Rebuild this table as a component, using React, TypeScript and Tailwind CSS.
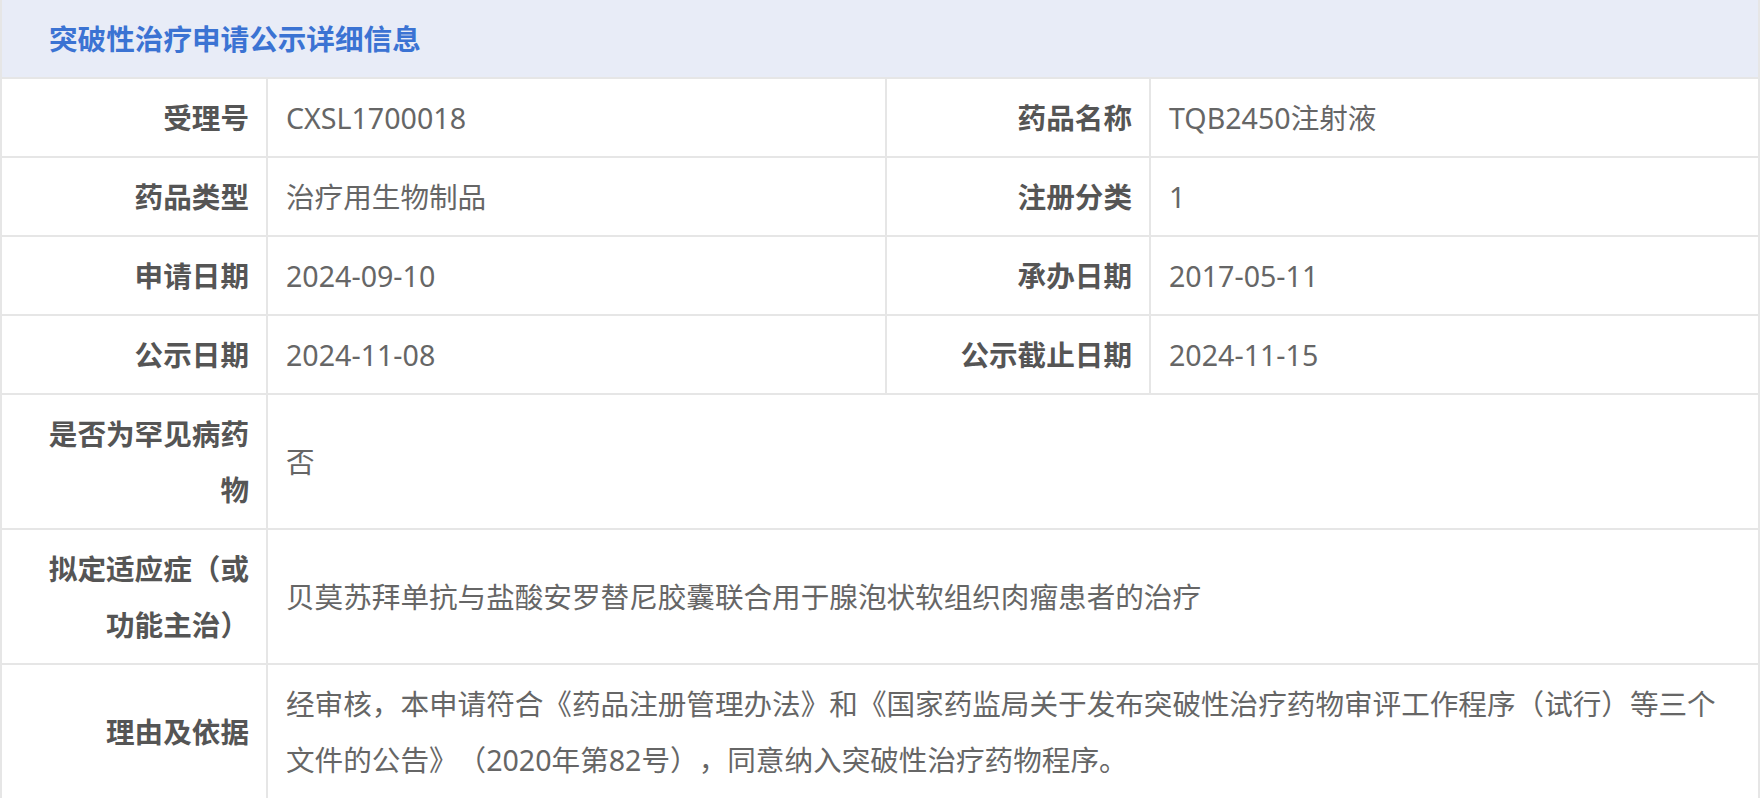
import type { ReactNode } from "react";

interface PairRow {
  label: string;
  value: string;
  label2: string;
  value2: string;
}

const pairRows: PairRow[] = [
  { label: "受理号", value: "CXSL1700018", label2: "药品名称", value2: "TQB2450注射液" },
  { label: "药品类型", value: "治疗用生物制品", label2: "注册分类", value2: "1" },
  { label: "申请日期", value: "2024-09-10", label2: "承办日期", value2: "2017-05-11" },
  { label: "公示日期", value: "2024-11-08", label2: "公示截止日期", value2: "2024-11-15" },
];

const labelCls =
  "border-2 border-[#e6e6e6] py-[10.5px] pl-[28px] pr-[17px] text-right align-middle font-bold text-[#555555]";
const valueCls =
  "border-2 border-[#e6e6e6] py-[10.5px] px-[18px] text-left align-middle text-[#666666]";

function Label({ children }: { children: ReactNode }) {
  return <td className={labelCls}>{children}</td>;
}

function Value({ children, span }: { children: ReactNode; span?: number }) {
  return (
    <td colSpan={span} className={valueCls}>
      {children}
    </td>
  );
}

export default function App() {
  return (
    <div className="w-[1760px] bg-white font-['Noto_Sans','Noto_Sans_CJK_SC',sans-serif] text-[28.6px] leading-[56px] [text-spacing-trim:space-all]">
      <table className="w-full table-fixed border-collapse">
        <colgroup>
          <col className="w-[266px]" />
          <col className="w-[619px]" />
          <col className="w-[264px]" />
          <col />
        </colgroup>
        <thead>
          <tr>
            <th
              colSpan={4}
              className="h-[78px] border-2 border-t-0 border-[#e6e6e6] bg-[#e8ecf7] pl-[47px] text-left align-middle font-bold text-[#3b73d3]"
            >
              突破性治疗申请公示详细信息
            </th>
          </tr>
        </thead>
        <tbody>
          {pairRows.map((r) => (
            <tr key={r.label}>
              <Label>{r.label}</Label>
              <Value>{r.value}</Value>
              <Label>{r.label2}</Label>
              <Value>{r.value2}</Value>
            </tr>
          ))}
          <tr>
            <Label>是否为罕见病药物</Label>
            <Value span={3}>否</Value>
          </tr>
          <tr>
            <Label>拟定适应症（或功能主治）</Label>
            <Value span={3}>贝莫苏拜单抗与盐酸安罗替尼胶囊联合用于腺泡状软组织肉瘤患者的治疗</Value>
          </tr>
          <tr>
            <Label>理由及依据</Label>
            <Value span={3}>
              经审核，本申请符合《药品注册管理办法》和《国家药监局关于发布突破性治疗药物审评工作程序（试行）等三个
              <br />
              文件的公告》（2020年第82号），同意纳入突破性治疗药物程序。
            </Value>
          </tr>
        </tbody>
      </table>
    </div>
  );
}
